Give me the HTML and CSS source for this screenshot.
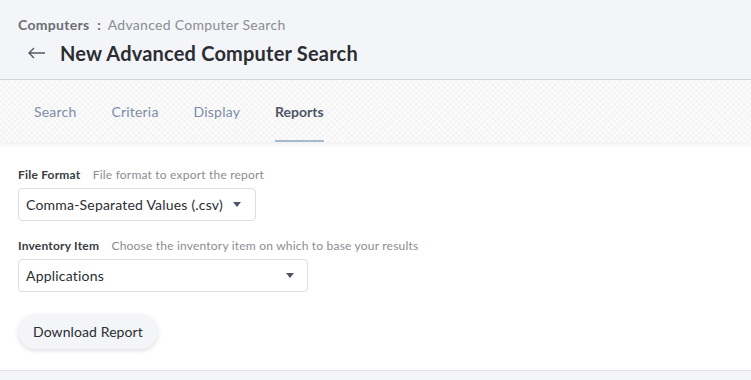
FILE: index.html
```html
<!DOCTYPE html>
<html lang="en">
<head>
    <meta charset="UTF-8">
    <meta name="viewport" content="width=device-width, initial-scale=1.0">
    <title>New Advanced Computer Search</title>
    <link rel="stylesheet" href="styles.css">
</head>
<body>
    <header class="page-header">
        <div class="breadcrumb">
            <span class="crumb-root">Computers</span>
            <span class="crumb-sep">:</span>
            <span class="crumb-current">Advanced Computer Search</span>
        </div>
        <div class="title-row">
            <a href="#" class="back-link"><svg xmlns="http://www.w3.org/2000/svg" width="18" height="12" viewBox="0 0 18 12"><path d="M1 6h16M6 1L1 6l5 5" fill="none" stroke="#555a63" stroke-width="1.4"/></svg></a>
            <h1>New Advanced Computer Search</h1>
        </div>
    </header>

    <nav class="tabs">
        <ul>
            <li><a href="#">Search</a></li>
            <li><a href="#">Criteria</a></li>
            <li><a href="#">Display</a></li>
            <li class="active"><a href="#">Reports</a></li>
        </ul>
    </nav>

    <main class="content">
        <div class="field">
            <div class="field-label">
                <label>File Format</label>
                <span class="hint">File format to export the report</span>
            </div>
            <div class="select select-format">
                <span>Comma-Separated Values (.csv)</span>
                <span class="caret"></span>
            </div>
        </div>

        <div class="field">
            <div class="field-label">
                <label>Inventory Item</label>
                <span class="hint">Choose the inventory item on which to base your results</span>
            </div>
            <div class="select select-item">
                <span>Applications</span>
                <span class="caret"></span>
            </div>
        </div>

        <button class="btn">Download Report</button>
    </main>

    <footer class="page-footer"></footer>
</body>
</html>
```

FILE: styles.css
```css
:root {
    --fondo: #f4f5f9;
    --borde: #d3d4db;
    --texto: #2b2d33;
    --gris: #6b6e74;
    --gris-claro: #8a8d93;
    --azul-gris: #7d8ca8;
    --azul-activo: #a6b9cf;
}

body {
    margin: 0;
    font-family: Lato, "Open Sans", sans-serif;
    color: var(--texto);
    background-color: #fff;
}

.page-header {
    background-color: var(--fondo);
    height: 80px;
    box-sizing: border-box;
    padding: 17px 18px 0;
    border-bottom: 1px solid var(--borde);
}

.breadcrumb {
    font-size: 14px;
    line-height: 16px;
    letter-spacing: 0.3px;
    color: var(--gris-claro);
}

.crumb-root {
    font-weight: bold;
    color: var(--gris);
}

.crumb-sep {
    font-weight: bold;
    color: var(--gris);
    margin: 0 3px 0 4px;
}

.title-row {
    display: flex;
    align-items: center;
    margin-top: 8px;
    padding-left: 10px;
}

.back-link {
    display: flex;
    width: 18px;
    margin-right: 14px;
}

.title-row h1 {
    margin: 0;
    font-size: 20px;
    line-height: 24px;
    letter-spacing: 0.2px;
    font-weight: bold;
    color: var(--texto);
}

.tabs {
    height: 62px;
    background-color: #f8f8f8;
    background-image:
        repeating-linear-gradient(45deg, rgba(0, 0, 0, 0.018) 0 2px, transparent 2px 4px),
        repeating-linear-gradient(-45deg, rgba(255, 255, 255, 0.7) 0 2px, transparent 2px 4px);
    box-shadow: 0 3px 5px rgba(0, 0, 0, 0.06);
    position: relative;
}

.tabs ul {
    margin: 0;
    padding: 0 0 0 34px;
    list-style: none;
    display: flex;
    gap: 35px;
    height: 100%;
}

.tabs li {
    display: flex;
    align-items: center;
    border-bottom: 2px solid transparent;
    box-sizing: border-box;
    height: 100%;
    padding-top: 2px;
}

.tabs a {
    text-decoration: none;
    font-size: 14px;
    letter-spacing: 0.2px;
    color: var(--azul-gris);
}

.tabs li.active {
    border-bottom-color: var(--azul-activo);
}

.tabs li.active a {
    color: #4d5566;
    font-weight: bold;
    letter-spacing: 0;
}

.content {
    padding: 26px 18px 18px;
    height: 228px;
    box-sizing: border-box;
}

.field {
    margin-bottom: 18px;
}

.field-label {
    font-size: 12px;
    line-height: 14px;
    letter-spacing: 0.2px;
    margin-bottom: 6px;
}

.field-label label {
    font-weight: bold;
    color: #3a3c42;
    margin-right: 9px;
}

.hint {
    color: var(--gris-claro);
}

.select {
    display: flex;
    align-items: center;
    justify-content: space-between;
    height: 33px;
    box-sizing: border-box;
    border: 1px solid #dcdde2;
    border-radius: 4px;
    padding: 0 14px 0 7px;
    font-size: 14px;
    letter-spacing: 0.2px;
    color: var(--texto);
    background-color: #fff;
}

.select-format {
    width: 238px;
}

.select-item {
    width: 290px;
    padding-right: 13px;
}

.caret {
    width: 0;
    height: 0;
    border-left: 4px solid transparent;
    border-right: 4px solid transparent;
    border-top: 5px solid #4d5566;
}

.btn {
    margin-top: 4px;
    background-color: var(--fondo);
    border: none;
    border-radius: 18px;
    height: 35px;
    padding: 0 15px;
    font-family: inherit;
    font-size: 14px;
    letter-spacing: 0.1px;
    color: var(--texto);
    box-shadow: 0 2px 4px rgba(0, 0, 0, 0.12);
    cursor: pointer;
}

.page-footer {
    border-top: 1px solid #e2e3e7;
    background-color: var(--fondo);
    height: 20px;
}
```
